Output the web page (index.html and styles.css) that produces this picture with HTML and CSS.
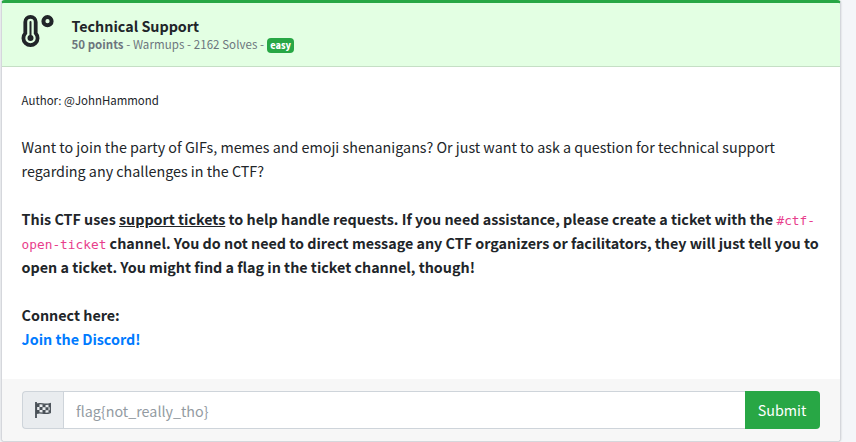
FILE: index.html
```html
<!DOCTYPE html>
<html lang="en">
<head>
<meta charset="utf-8">
<title>Technical Support</title>
<link rel="stylesheet" href="styles.css">
</head>
<body>
<main class="card">
  <header class="head">
    <svg class="thermo" viewBox="0 0 36 36" aria-hidden="true">
      <path class="wall" d="M7.300 10.100a5.200 5.200 0 0 1 10.400 0v11.100a7.100 7.100 0 1 1-10.400 0z"/>
      <path class="stem" d="M12.500 10v15"/>
      <circle cx="12.500" cy="26" r="3"/>
      <circle class="ring" cx="29.500" cy="9.200" r="4.100"/>
    </svg>
    <div>
      <h1 class="title">Technical Support</h1>
      <p class="meta"><b>50 points</b> - Warmups - 2162 Solves - <span class="badge">easy</span></p>
    </div>
  </header>
  <section class="body">
    <p class="author">Author: @JohnHammond</p>
    <p class="intro">Want to join the party of GIFs, memes and emoji shenanigans? Or just want to ask a question for technical support<br>regarding any challenges in the CTF?</p>
    <p class="strong">This CTF uses <u>support tickets</u> to help handle requests. If you need assistance, please create a ticket with the <code>#ctf-</code><br><code>open-ticket</code> channel. You do not need to direct message any CTF organizers or facilitators, they will just tell you to<br>open a ticket. You might find a flag in the ticket channel, though!</p>
    <p class="strong">Connect here:<br><a href="#">Join the Discord!</a></p>
  </section>
  <footer class="foot">
    <span class="addon"><svg class="flag" viewBox="0 0 18 18" aria-hidden="true">
      <path class="pole" d="M2 1v16"/>
      <path class="cloth" d="M2.500 3.200c5-2 7 1.500 13.800-.6v9c-6.800 2.600-8.800-1.300-13.800.7z"/>
      <path d="M3 3h2.500v3H3zM8.500 3.300h3v3h-3zM5.500 6h3v3h-3zM11.500 6.300h3v3h-3zM3 9h2.500v3H3zM8.500 9h3v3h-3zM14.500 3h1.800v3.300h-1.800zM14.500 9.300h1.800v2h-1.800z"/>
    </svg></span>
    <input class="field" type="text" placeholder="flag{not_really_tho}">
    <button class="submit" type="button">Submit</button>
  </footer>
</main>
</body>
</html>
```
FILE: styles.css
```css
* { box-sizing: border-box; }
body {
  margin: 0;
  height: 442px;
  overflow: hidden;
  background: #f4f6f9;
  color: #212529;
  font-family: "Noto Sans CJK JP", "Noto Sans", sans-serif;
  font-size: 14.32px;
  font-weight: 400;
  line-height: 24px;
}
p, h1 { margin: 0; }
.card {
  width: 840px;
  height: 442px;
  margin-left: 1px;
  display: flex;
  flex-direction: column;
  background: #fff;
  border: 1px solid #d5d7dc;
  border-top: 3px solid #28a745;
  border-radius: 4px;
  box-shadow: 0 0 2px rgba(0, 0, 0, .2);
  overflow: hidden;
}
.head {
  height: 64px;
  flex: none;
  display: flex;
  padding: 9px 16px 0 16px;
  background: #e3ffe3;
  border-bottom: 1px solid #c5dfc5;
}
.thermo { width: 36px; height: 36px; margin-right: 17.5px; fill: #212529; }
.wall, .stem, .ring { stroke: #212529; }
.wall { fill: none; stroke-width: 3.8; }
.stem { stroke-width: 2; stroke-linecap: round; }
.ring { fill: none; stroke-width: 4; }
.title { margin-top: 2px; font-size: 14.32px; line-height: 24px; font-weight: 700; }
.meta { margin-top: -3px; font-size: 11.500px; line-height: 18px; letter-spacing: .07px; color: #6c757d; white-space: nowrap; }
.meta b { font-weight: 700; letter-spacing: 0; }
.badge {
  display: inline-block;
  height: 15px;
  padding: 0 3.500px;
  border-radius: 4px;
  background: #28a745;
  color: #fff;
  font-size: 9px;
  line-height: 15px;
  font-weight: 900;
  letter-spacing: 0;
  vertical-align: middle;
}
.body { flex: 1; padding: 21px 20px 0 19.6px; white-space: nowrap; }
.author { font-size: 11.450px; }
.intro { margin-top: 23px; }
.strong { margin-top: 24px; font-weight: 700; }
code { font: 400 12.800px/20px "DejaVu Sans Mono", monospace; color: #e83e8c; }
a { color: #007bff; text-decoration: none; }
.foot {
  height: 62px;
  flex: none;
  display: flex;
  padding: 12px 20px 11px;
  background: #f7f7f7;
}
.addon {
  width: 41px;
  height: 38px;
  display: flex;
  align-items: center;
  justify-content: center;
  background: #e9ecef;
  border: 1px solid #ced4da;
  border-right: 0;
  border-radius: 4px 0 0 4px;
}
.flag { width: 18px; height: 18px; fill: #495057; }
.pole, .cloth { fill: none; stroke: #495057; stroke-width: 1.3; }
.pole { stroke-width: 1.8; }
.field {
  flex: 1;
  height: 38px;
  padding: 0 12px;
  border: 1px solid #ced4da;
  border-right: 0;
  background: #fff;
  font: inherit;
}
.field::placeholder { color: #939ba2; }
.submit {
  width: 75px;
  height: 38px;
  padding: 0 1px 0 0;
  border: 0;
  border-radius: 0 4px 4px 0;
  background: #28a745;
  color: #fff;
  font: inherit;
}
```
